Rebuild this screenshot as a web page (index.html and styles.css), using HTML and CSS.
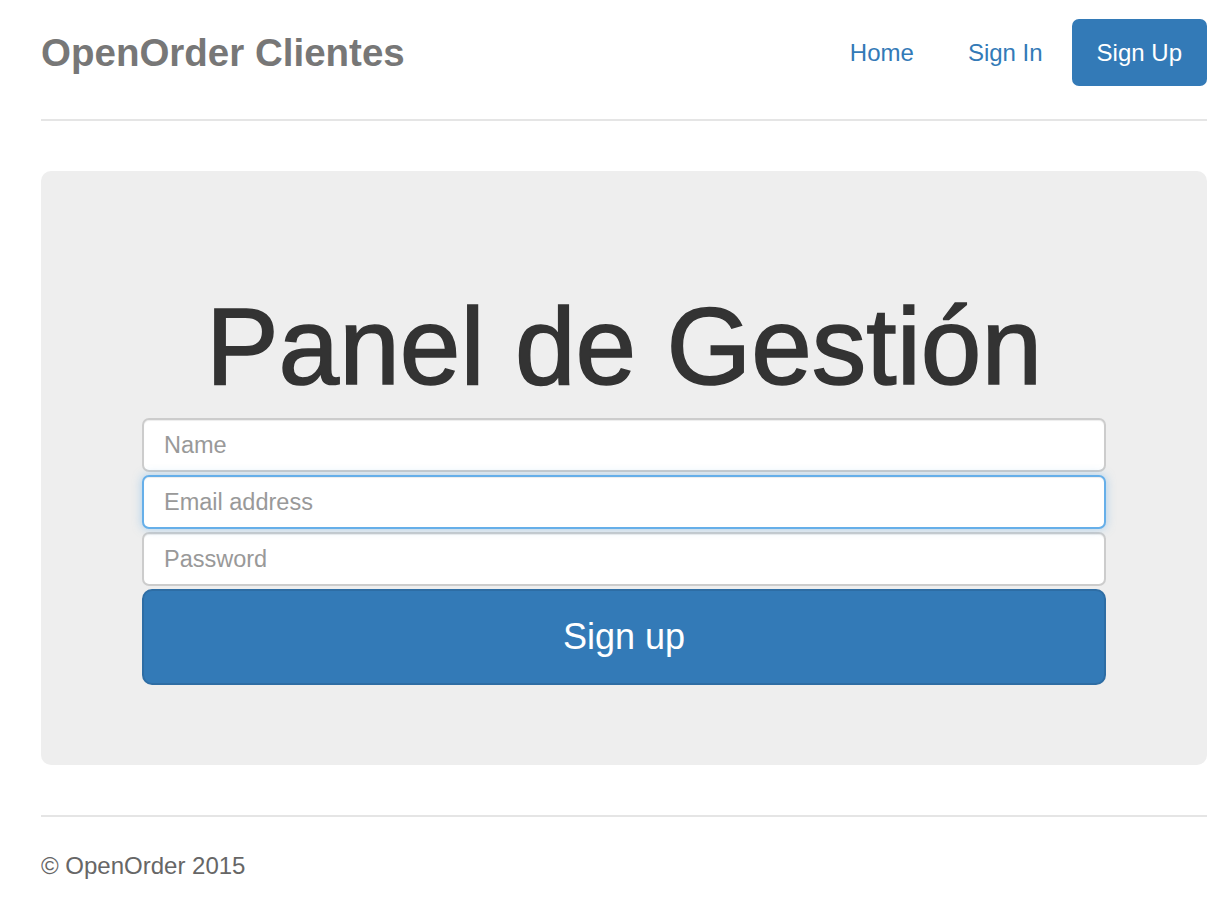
FILE: index.html
```html
<!DOCTYPE html>
<html lang="es">
<head>
<meta charset="utf-8">
<title>OpenOrder Clientes</title>
<link rel="stylesheet" href="styles.css">
</head>
<body>
<div class="container">
  <header class="header">
    <h3 class="brand">OpenOrder Clientes</h3>
    <nav class="nav">
      <a class="nav-link" href="#">Home</a>
      <a class="nav-link" href="#">Sign In</a>
      <a class="nav-link active" href="#">Sign Up</a>
    </nav>
  </header>

  <main class="jumbotron">
    <h1 class="title">Panel de Gestión</h1>
    <form class="form-signin">
      <input class="form-control" type="text" placeholder="Name">
      <input class="form-control focused" type="email" placeholder="Email address">
      <input class="form-control" type="password" placeholder="Password">
      <button class="btn-primary" type="button">Sign up</button>
    </form>
  </main>

  <footer class="footer">
    <p>© OpenOrder 2015</p>
  </footer>
</div>
</body>
</html>
```

FILE: styles.css
```css
html, body {
  margin: 0;
  padding: 0;
  background: #fff;
}
body {
  font-family: "Liberation Sans", Arial, Helvetica, sans-serif;
  font-size: 23.5px;
  line-height: 1.42857;
  color: #333;
}
.container {
  width: 1166px;
  margin-left: 41px;
  padding-top: 19px;
}
.header {
  display: flex;
  justify-content: space-between;
  align-items: flex-start;
  padding-bottom: 33px;
  border-bottom: 2px solid #e5e5e5;
}
.brand {
  margin: 0;
  font-size: 38.5px;
  line-height: 67px;
  font-weight: bold;
  color: #777;
}
.nav {
  display: flex;
  gap: 4px;
}
.nav-link {
  display: block;
  padding: 0 25px;
  line-height: 67px;
  height: 67px;
  color: #337ab7;
  text-decoration: none;
  border-radius: 7px;
  font-size: 24px;
}
.nav-link.active {
  background: #337ab7;
  color: #fff;
}
.jumbotron {
  margin-top: 50px;
  background: #eee;
  border-radius: 10px;
  padding: 116px 0 80px;
  text-align: center;
}
.title {
  margin: 0 0 12px;
  font-size: 109px;
  line-height: 119px;
  font-weight: normal;
  color: #333;
  -webkit-text-stroke: 1.6px #333;
}
.form-signin {
  width: 964px;
  margin: 0 auto;
  display: flex;
  flex-direction: column;
  gap: 3px;
}
.form-control {
  box-sizing: border-box;
  display: block;
  width: 100%;
  height: 54px;
  margin: 0;
  padding: 0 20px;
  font-family: inherit;
  font-size: 23.5px;
  color: #555;
  background: #fff;
  border: 2px solid #ccc;
  border-radius: 7px;
  box-shadow: inset 0 1px 1px rgba(0,0,0,.075);
  outline: none;
}
.form-control::placeholder {
  color: #999;
}
.form-control.focused {
  border-color: #66afe9;
  box-shadow: inset 0 1px 1px rgba(0,0,0,.075), 0 0 10px rgba(102,175,233,.5);
  position: relative;
}
.btn-primary {
  box-sizing: border-box;
  display: block;
  width: 100%;
  height: 96px;
  margin: 0;
  font-family: inherit;
  font-size: 36px;
  color: #fff;
  background: #337ab7;
  border: 2px solid #2e6da4;
  border-radius: 10px;
  cursor: pointer;
}
.footer {
  margin-top: 50px;
  border-top: 2px solid #e5e5e5;
  padding-top: 32px;
}
.footer p {
  margin: 0;
  font-size: 24px;
  line-height: 33px;
  color: #666;
}
```
